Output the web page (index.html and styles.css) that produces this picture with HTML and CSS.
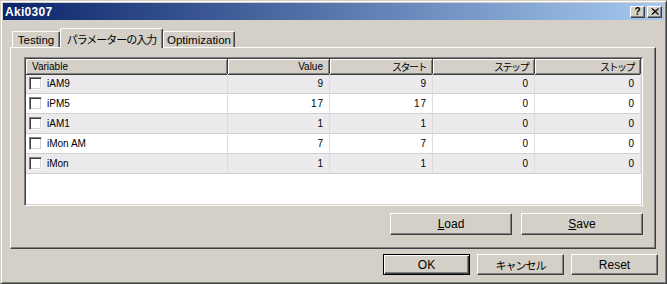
FILE: index.html
```html
<!DOCTYPE html>
<html>
<head>
<title>Aki0307</title>
<link rel="stylesheet" href="styles.css">
</head>
<body>
<div class="window">
  <div class="titlebar">
    <span class="title">Aki0307</span>
    <div class="caption-btns">
      <span class="cap-btn">?</span>
      <span class="cap-btn">
        <svg width="8" height="7" viewBox="0 0 8 7"><path d="M0.5 0.5L7 6.5M1.5 0.5L8 6.5M7 0.5L0.5 6.5M8 0.5L1.5 6.5" stroke="#000" stroke-width="1" fill="none"/></svg>
      </span>
    </div>
  </div>

  <div class="tabs">
    <div class="tab tab-testing">Testing</div>
    <div class="tab tab-active"><span class="jp">パラメーターの入力</span></div>
    <div class="tab tab-opt">Optimization</div>
  </div>

  <div class="panel">
    <div class="list">
      <div class="list-head">
        <div class="hcell hcell-left">Variable</div>
        <div class="hcell">Value</div>
        <div class="hcell"><span class="jp-s">スタート</span></div>
        <div class="hcell"><span class="jp-s">ステップ</span></div>
        <div class="hcell"><span class="jp-s">ストップ</span></div>
      </div>
      <div class="list-row alt">
        <div class="cell cell-name"><span class="check"></span>iAM9</div>
        <div class="cell">9</div><div class="cell">9</div><div class="cell">0</div><div class="cell">0</div>
      </div>
      <div class="list-row">
        <div class="cell cell-name"><span class="check"></span>iPM5</div>
        <div class="cell">17</div><div class="cell">17</div><div class="cell">0</div><div class="cell">0</div>
      </div>
      <div class="list-row alt">
        <div class="cell cell-name"><span class="check"></span>iAM1</div>
        <div class="cell">1</div><div class="cell">1</div><div class="cell">0</div><div class="cell">0</div>
      </div>
      <div class="list-row">
        <div class="cell cell-name"><span class="check"></span>iMon AM</div>
        <div class="cell">7</div><div class="cell">7</div><div class="cell">0</div><div class="cell">0</div>
      </div>
      <div class="list-row alt">
        <div class="cell cell-name"><span class="check"></span>iMon</div>
        <div class="cell">1</div><div class="cell">1</div><div class="cell">0</div><div class="cell">0</div>
      </div>
    </div>
    <div class="panel-btns">
      <button class="btn btn-wide"><u>L</u>oad</button>
      <button class="btn btn-wide"><u>S</u>ave</button>
    </div>
  </div>

  <div class="dialog-btns">
    <button class="btn btn-default">OK</button>
    <button class="btn"><span class="jp">キャンセル</span></button>
    <button class="btn">Reset</button>
  </div>
</div>
</body>
</html>
```

FILE: styles.css
```css
* {
  margin: 0;
  padding: 0;
  box-sizing: border-box;
}

body {
  background: #d4d0c8;
  font-family: "Liberation Sans", "Noto Sans CJK JP", sans-serif;
  font-size: 12px;
  color: #000;
}

.window {
  width: 667px;
  height: 284px;
  background: #d4d0c8;
  border: 1px solid;
  border-color: #d4d0c8 #404040 #404040 #d4d0c8;
  box-shadow: inset 1px 1px #fff, inset -1px -1px #808080;
  padding: 2px;
  display: flex;
  flex-direction: column;
}

/* caption */
.titlebar {
  height: 17px;
  background: linear-gradient(to right, #0a246a, #a6caf0);
  display: flex;
  align-items: center;
  justify-content: space-between;
  padding: 0 2px 0 2px;
}
.title {
  color: #fff;
  font-weight: bold;
  font-size: 12px;
  letter-spacing: 0.3px;
}
.caption-btns {
  display: flex;
  gap: 2px;
}
.cap-btn {
  width: 15px;
  height: 12px;
  background: #d4d0c8;
  border: 1px solid;
  border-color: #fff #404040 #404040 #fff;
  box-shadow: inset -1px -1px #808080;
  display: flex;
  align-items: center;
  justify-content: center;
  font-weight: bold;
  font-size: 10px;
  line-height: 1;
}

/* tabs */
.tabs {
  display: flex;
  align-items: flex-end;
  height: 19px;
  margin-top: 8px;
  padding-left: 9px;
}
.tab {
  height: 16px;
  border: 1px solid;
  border-color: #fff #404040 transparent #fff;
  border-bottom: 0;
  border-radius: 2px 2px 0 0;
  box-shadow: inset -1px 0 #808080;
  display: flex;
  align-items: center;
  justify-content: center;
  font-size: 11.5px;
  padding-top: 1px;
}
.tab-testing { width: 48px; }
.tab-opt { width: 72px; }
.tab-active {
  width: 103px;
  height: 20px;
  margin-bottom: -1px;
  position: relative;
  z-index: 1;
  background: #d4d0c8;
  padding-top: 0;
}
.jp {
  font-family: "Noto Sans CJK JP", sans-serif;
  font-size: 11px;
  letter-spacing: -1px;
}
.jp-s {
  font-family: "Noto Sans CJK JP", sans-serif;
  font-size: 10px;
  letter-spacing: -1.5px;
}

/* tab page */
.panel {
  width: 646px;
  height: 202px;
  margin-left: 7px;
  border: 1px solid;
  border-color: #fff #404040 #404040 #fff;
  box-shadow: inset -1px -1px #808080;
  padding: 9px 12px 0 13px;
}

.list {
  height: 149px;
  background: #fff;
  border: 1px solid;
  border-color: #808080 #fff #fff #808080;
  box-shadow: inset 1px 1px #404040, inset -1px -1px #d4d0c8;
  padding: 1px;
  font-size: 10px;
}
.list-head,
.list-row {
  display: grid;
  grid-template-columns: 202px 102px 103px 102px 1fr;
}
.list-head {
  height: 15px;
}
.hcell {
  background: #d4d0c8;
  box-shadow: inset 1px 1px #fff, inset -1px -1px #808080;
  border-right: 1px solid #404040;
  border-bottom: 1px solid #404040;
  display: flex;
  align-items: center;
  justify-content: flex-end;
  padding: 0 6px 0 6px;
}
.hcell-left {
  justify-content: flex-start;
}

.list-row {
  height: 20px;
}
.list-row.alt {
  background: #edeaed;
}
.cell {
  border-right: 1px solid #dcdcdc;
  border-bottom: 1px solid #d0d0d0;
  display: flex;
  align-items: center;
  justify-content: flex-end;
  padding-right: 5px;
  letter-spacing: 1px;
}
.cell-name {
  justify-content: flex-start;
  padding-left: 3px;
  letter-spacing: 0;
}
.check {
  width: 13px;
  height: 13px;
  background: #fff;
  border: 1px solid;
  border-color: #808080 #fff #fff #808080;
  box-shadow: inset 1px 1px #404040, inset -1px -1px #d4d0c8;
  margin-right: 5px;
}

/* buttons */
.btn {
  width: 87px;
  height: 21px;
  background: #d4d0c8;
  border: 1px solid;
  border-color: #fff #404040 #404040 #fff;
  box-shadow: inset -1px -1px #808080;
  font-family: "Liberation Sans", "Noto Sans CJK JP", sans-serif;
  font-size: 12px;
  color: #000;
}
.btn-wide {
  width: 122px;
  height: 22px;
}
.btn-default {
  border: 1px solid #000;
  box-shadow: inset 1px 1px #fff, inset -1px -1px #404040, inset -2px -2px #808080;
}
.panel-btns {
  display: flex;
  justify-content: flex-end;
  gap: 9px;
  margin-top: 7px;
}
.dialog-btns {
  display: flex;
  justify-content: flex-end;
  gap: 7px;
  margin-top: 5px;
  padding-right: 6px;
}
```
